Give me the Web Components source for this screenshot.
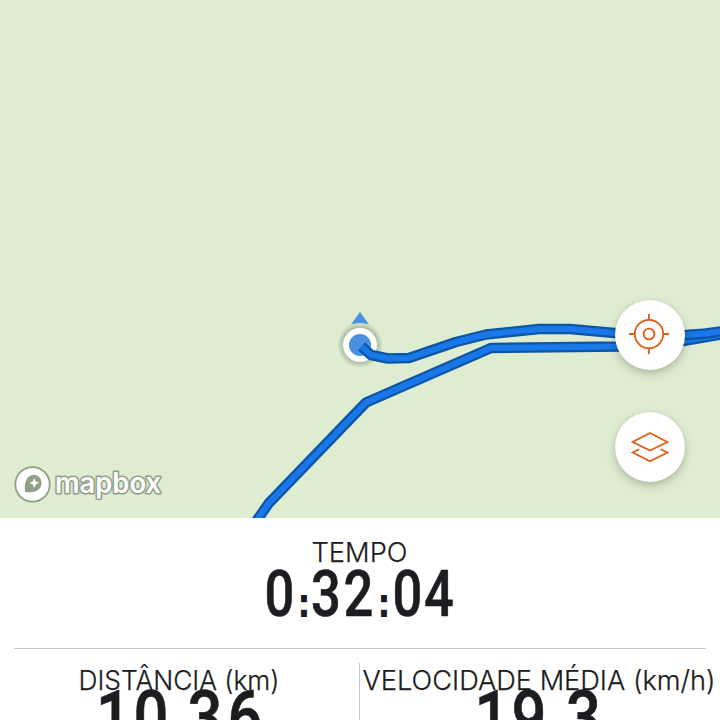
<!DOCTYPE html>
<html lang="pt"><head><meta charset="utf-8"><title>Atividade</title>
<style>html,body{margin:0;height:100%;overflow:hidden;background:#fff;font-family:Inter,"Liberation Sans",sans-serif;color:#1d1d21}</style></head>
<body><ride-screen></ride-screen>
<script>
const define=(name,html)=>customElements.define(name,class extends HTMLElement{
 constructor(){super();this.attachShadow({mode:'open'}).innerHTML=html}});
customElements.define('fit-label',class extends HTMLElement{
 connectedCallback(){const r=this.attachShadow({mode:'open'}),w=+this.getAttribute('width');
 r.innerHTML=`<style>:host{display:block;height:32px}svg{display:block;margin:auto;overflow:visible}text{font:300 27.5px Inter,"Liberation Sans",sans-serif;fill:#1d1d21;stroke:#1d1d21;stroke-width:.25}</style><svg width="${w}" height="32"><text x="-1.5" y="26" textLength="${w+1}" lengthAdjust="spacingAndGlyphs"></text></svg>`;
 r.querySelector('text').textContent=this.getAttribute('text')}});
customElements.define('din-value',class extends HTMLElement{
 connectedCallback(){const r=this.attachShadow({mode:'open'}),w=this.getAttribute('width'),s=+this.getAttribute('size'),xs=this.getAttribute('xs').split(' '),k=.82;
 const t=[...this.getAttribute('text')].map((c,i)=>`<tspan class="${c===':'?'c':''}" x="${xs[i]/k}">${c}</tspan>`).join('');
 r.innerHTML=`<style>:host{display:block}svg{display:block;margin:auto;overflow:visible}text{font:500 ${s}px Roboto,sans-serif;fill:#1d1d21;text-anchor:middle;stroke:#1d1d21;stroke-width:.6}.c{font:700 38px "Liberation Sans",sans-serif;stroke-width:1.8}</style><svg width="${w}" height="${s*.72}"><text transform="scale(${k} 1)" y="${s*.711}">${t}</text></svg>`}});
define('round-button',`<style>:host{display:grid;place-items:center;width:70px;height:70px;border-radius:50%;background:#fff;box-shadow:0 4px 10px #0003,0 0 4px #0001}</style><slot></slot>`);
define('icon-target',`<style>:host{display:block;width:40px;height:40px;margin:-2px 2px 0 0}svg{display:block}</style><svg width="40" height="40" fill="none" stroke="#e35b12" stroke-width="1.8"><circle cx="20" cy="20" r="14.2"/><circle cx="20" cy="20" r="5.4"/><path d="M20 0v6M20 34v6M0 20h6M34 20h6"/></svg>`);
define('icon-layers',`<style>:host{display:block;width:40px;height:34px}svg{display:block}</style><svg width="40" height="34" fill="none" stroke="#e35b12" stroke-width="1.7"><path d="M20 3 37.4 12 20 20.500 2.6 12ZM9.3 19.2 2.6 22.5 20 31.2 37.4 22.5 30.7 19.2"/></svg>`);
define('mapbox-logo',`<style>:host{display:block;width:150px;height:38px}svg{display:block;overflow:visible}</style><svg width="150" height="38"><circle cx="18.5" cy="19.4" r="17.200" fill="#fff" stroke="#8fa087" stroke-width="1.8"/><path d="M11.200 27C9.700 19 12 10 20 9.800a8 8 0 0 1 7.600 8.600C27 25.500 20 28 11.200 27Z" fill="#8fa087"/><path d="m20.300 13 1.500 3.400 3.400 1.600-3.400 1.600-1.500 3.400-1.600-3.400-3.300-1.600 3.300-1.600Z" fill="#fff"/><text x="41" y="27.500" textLength="106" lengthAdjust="spacingAndGlyphs" font-family="Inter,sans-serif" font-size="28" font-weight="600" fill="#fff" stroke="#8fa087" stroke-width="3.200" stroke-linejoin="round" paint-order="stroke">mapbox</text></svg>`);
define('route-map',`<style>:host{display:block;position:relative;height:518px;background:#deedd1;overflow:hidden}svg{display:block}
.tools{position:absolute;left:615px;top:300px;display:grid;gap:42px}mapbox-logo{position:absolute;left:14px;top:465px}</style>
<svg width="720" height="518" fill="none"><defs><radialGradient id="g"><stop offset=".68" stop-color="#66745c" stop-opacity=".5"/><stop offset="1" stop-color="#66745c" stop-opacity="0"/></radialGradient></defs>
<circle cx="360" cy="345" r="23" fill="url(#g)"/><circle cx="360" cy="345" r="17" fill="#fff"/><circle cx="360" cy="345" r="11" fill="#4a90e2"/><path d="M360 312 369 324.500Q360 321.500 351 324.500Z" fill="#4a90e2"/>
<g stroke-linejoin="round"><path d="M250 530 269 503 366 402.500 491 348 620 346.500 680 341.500 730 333" stroke="#0c56a6" stroke-width="10.500"/><path d="M250 530 269 503 366 402.500 491 348 620 346.500 680 341.500 730 333" stroke="#1977e8" stroke-width="6"/>
<path d="M361.500 346.500 371 355 388 358.500 409 358 456 342 486 334.500 539 329 570 329 620 333.500 680 335.500 706 333.500 730 330" stroke="#0c56a6" stroke-width="10.500"/><path d="M361.500 346.500 371 355 388 358.500 409 358 456 342 486 334.500 539 329 570 329 620 333.500 680 335.500 706 333.500 730 330" stroke="#1977e8" stroke-width="6"/></g></svg>
<mapbox-logo></mapbox-logo><div class="tools"><round-button><icon-target></icon-target></round-button><round-button><icon-layers></icon-layers></round-button></div>`);
define('ride-stats',`<style>:host{display:block}.time{padding-top:18px;box-sizing:border-box;margin:0 14px;border-bottom:1px solid #c8c8c8;height:131px}.time din-value{margin-top:2px}.row{display:grid;grid-template-columns:359px 361px}.cell{padding-top:15px;height:60px}.cell din-value{margin-top:-6px}.right{border-left:1px solid #c8c8c8;margin-top:14px;padding-top:1px}</style>
<div class="time"><fit-label text="TEMPO" width="95"></fit-label><din-value text="0:32:04" width="190" size="64" xs="14.500 39 61 93.500 119 142.500 174"></din-value></div>
<div class="row"><div class="cell"><fit-label text="DISTÂNCIA (km)" width="200"></fit-label><din-value text="10,36" width="160" size="75" xs="13.500 51 78 105 145"></din-value></div>
<div class="cell right"><fit-label text="VELOCIDADE MÉDIA (km/h)" width="352"></fit-label><din-value text="19,3" width="120" size="75" xs="12 49 75 103.500"></din-value></div></div>`);
define('ride-screen',`<style>:host{display:block;width:720px;height:720px;overflow:hidden;background:#fff}</style><route-map></route-map><ride-stats></ride-stats>`);
</script></body></html>
